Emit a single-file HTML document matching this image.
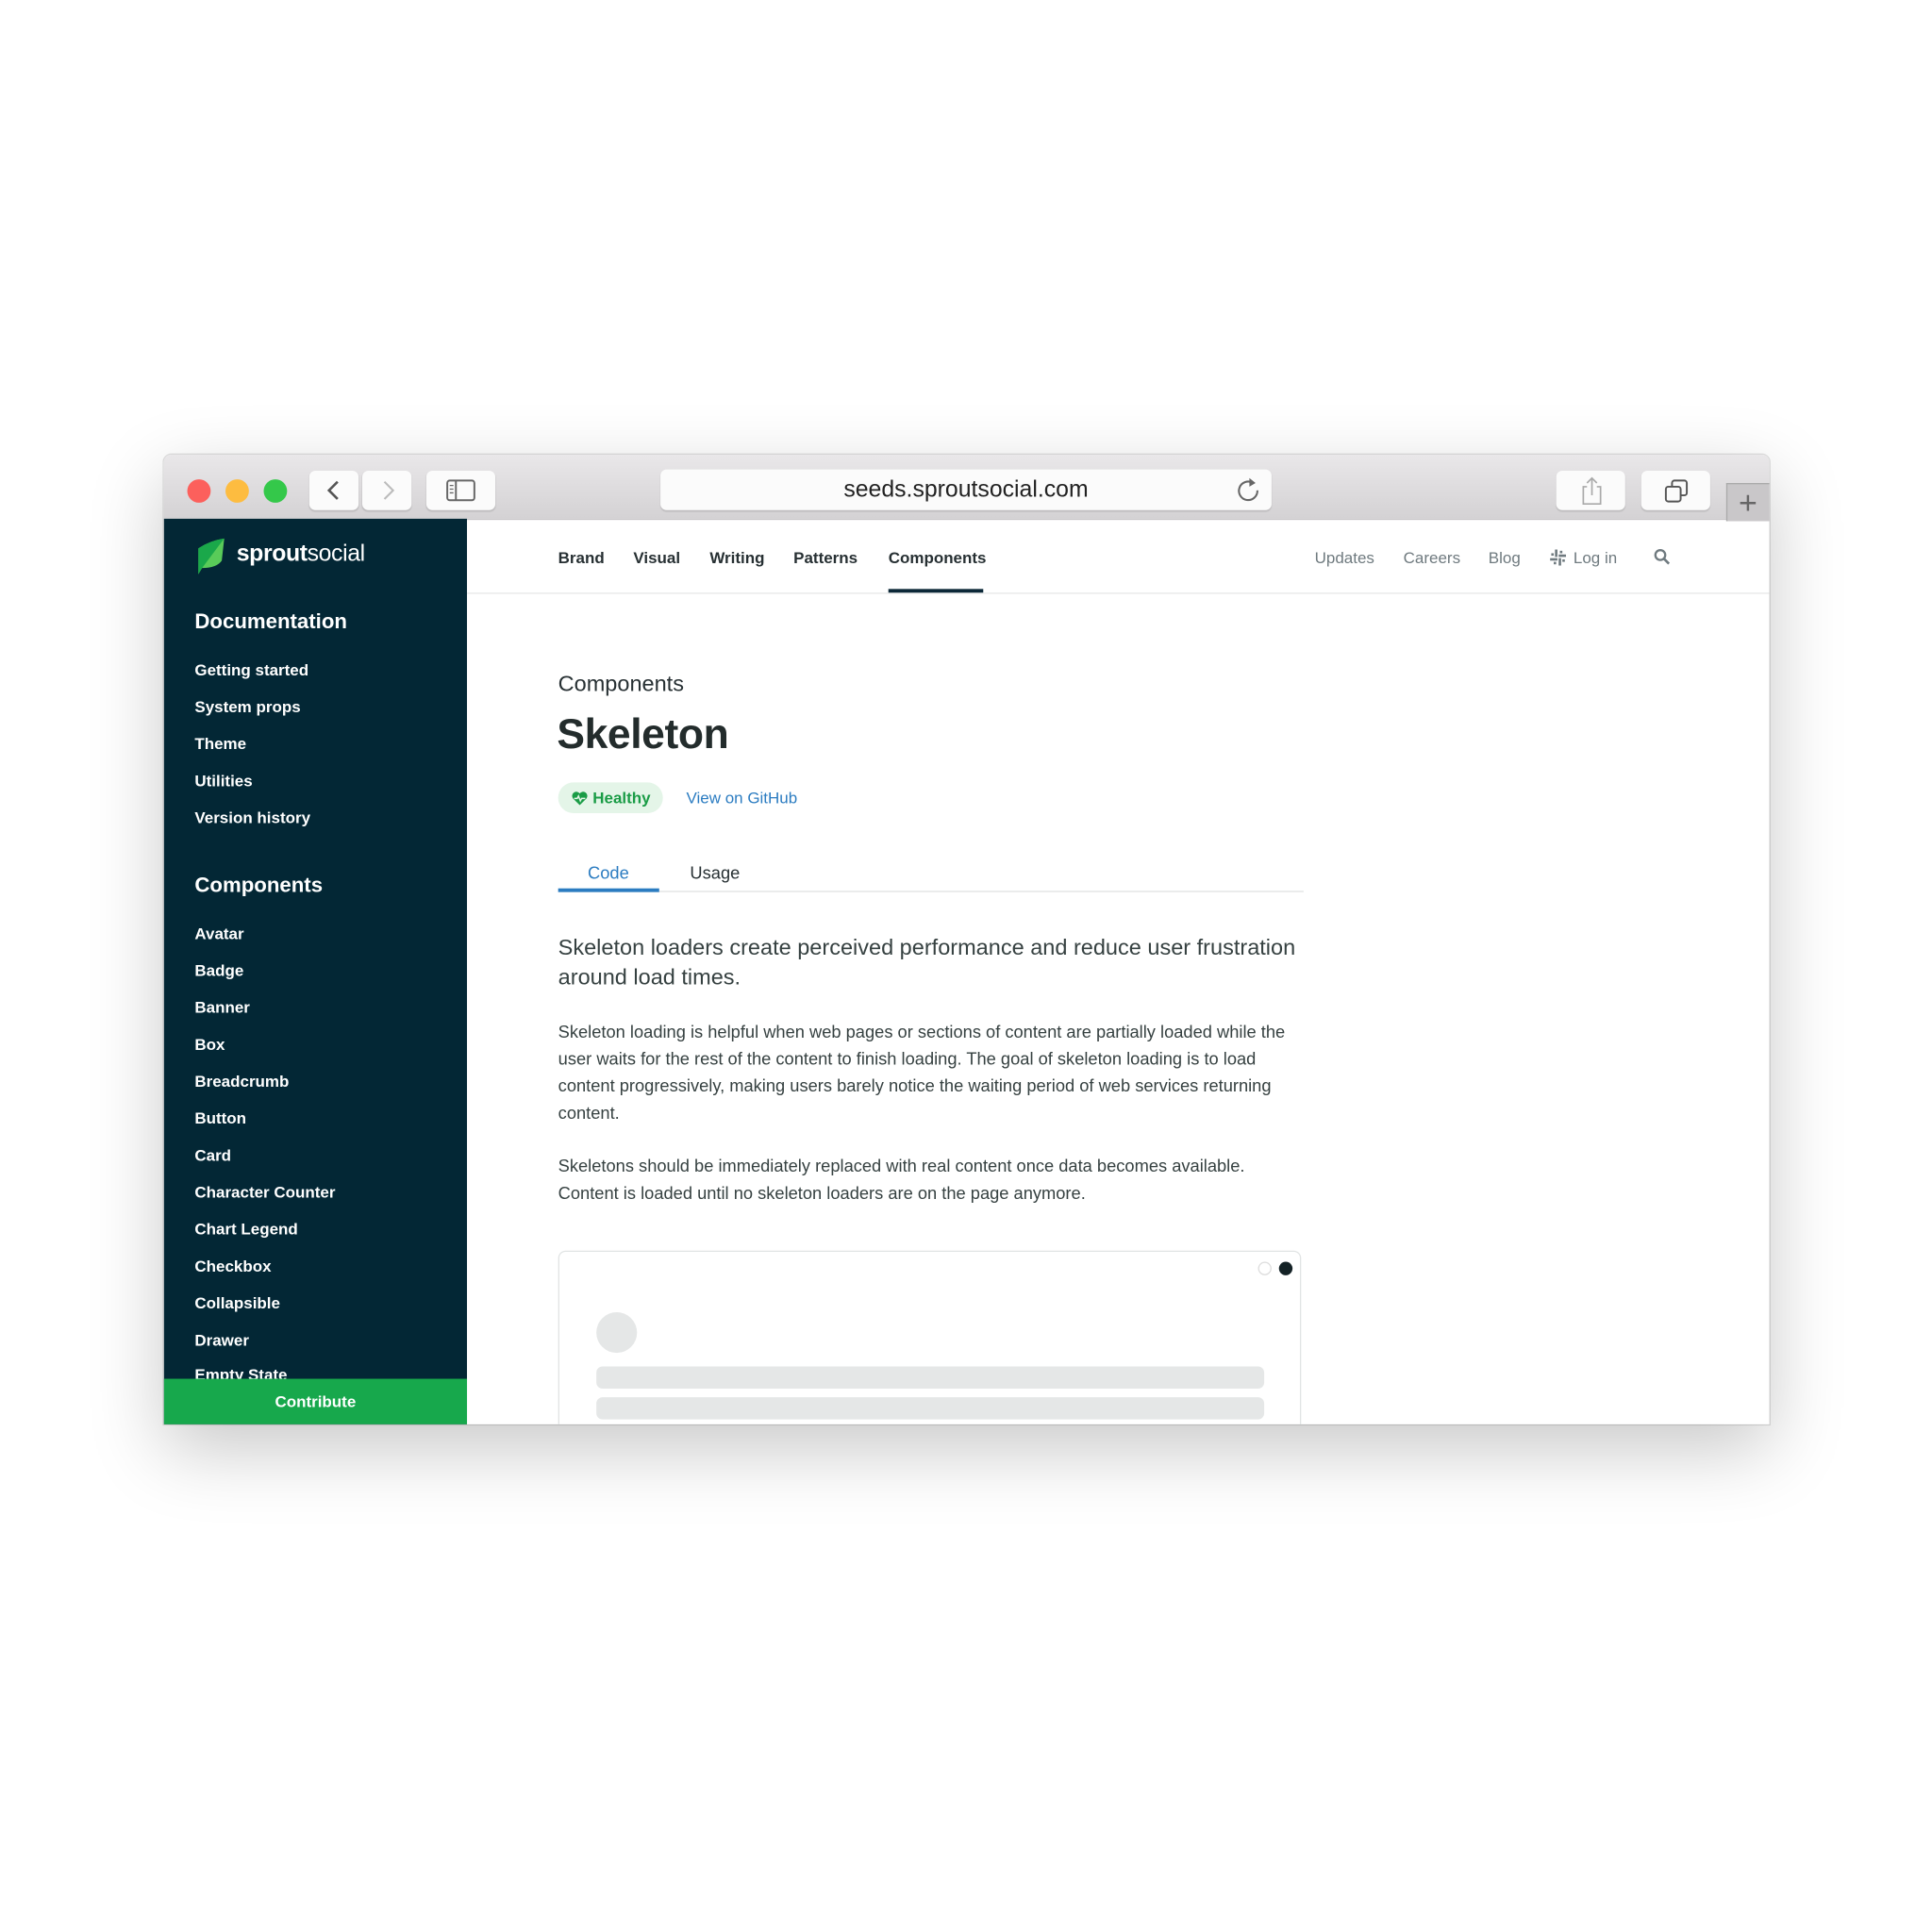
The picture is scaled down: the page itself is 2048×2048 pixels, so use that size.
<!DOCTYPE html>
<html><head><meta charset="utf-8"><style>
html,body{margin:0;padding:0;background:#fff;width:2048px;height:2048px;overflow:hidden}
#s{position:absolute;left:0;top:0;width:1568px;height:1568px;transform:scale(1.306122);transform-origin:0 0;font-family:"Liberation Sans",Arial,sans-serif}
.a{position:absolute}
#win{left:133px;top:369px;width:1303px;height:787px;border-radius:6px 6px 0 0;overflow:hidden;box-shadow:0 20px 60px rgba(0,0,0,.22),0 0 0 1px rgba(0,0,0,.12);background:#fff}
#tb{left:0;top:0;width:1303px;height:52px;background:linear-gradient(#e9e7e9,#d4d2d4);border-bottom:1px solid #c8c6c8}
.dot{width:19px;height:19px;border-radius:50%;top:20px}
.btn{background:#fbfbfb;border-radius:5px;box-shadow:0 1px 1px rgba(0,0,0,.12);height:32px;top:13px}
#sb{left:0;top:52px;width:246px;height:735px;background:#032735}
.sbi{position:absolute;left:25px;color:#fff;font-weight:bold;font-size:13px}
.sbh{position:absolute;left:25px;color:#fff;font-weight:bold;font-size:17px}
.nav{position:absolute;top:76px;font-size:13px;font-weight:bold;color:#273033}
.nr{position:absolute;top:76px;font-size:13px;color:#6f7a7f}
p{margin:0}
</style></head><body><div id="s">
<div id="win" class="a">
 <div id="tb" class="a">
  <div class="a dot" style="left:19px;background:#fc605c"></div>
  <div class="a dot" style="left:50px;background:#fdbc40"></div>
  <div class="a dot" style="left:81px;background:#34c84a"></div>
  <div class="a btn" style="left:118px;width:40px"><svg class="a" style="left:12px;top:7px" width="16" height="18"><path d="M11 2 L4 9 L11 16" stroke="#555" stroke-width="2" fill="none"/></svg></div>
  <div class="a btn" style="left:161px;width:40px"><svg class="a" style="left:13px;top:7px" width="16" height="18"><path d="M5 2 L12 9 L5 16" stroke="#bbb" stroke-width="1.6" fill="none"/></svg></div>
  <div class="a btn" style="left:213px;width:56px"><svg class="a" style="left:16px;top:7px" width="24" height="18"><rect x="1" y="1" width="22" height="16" rx="2" stroke="#666" stroke-width="1.5" fill="none"/><line x1="8" y1="1" x2="8" y2="17" stroke="#666" stroke-width="1.5"/><path d="M3 5h3M3 8h3M3 11h3" stroke="#666"/></svg></div>
  <div class="a btn" style="left:403px;width:496px;top:12px;height:33px"><div class="a" style="left:0;width:496px;top:6px;text-align:center;font-size:19px;color:#222">seeds.sproutsocial.com</div>
   <svg class="a" style="left:466px;top:6px" width="22" height="22"><path d="M15 5 A7.5 7.5 0 1 0 18.5 11" stroke="#666" stroke-width="1.6" fill="none"/><path d="M12 1 L17 5 L12 8z" fill="#666"/></svg></div>
  <div class="a btn" style="left:1130px;width:56px"><svg class="a" style="left:19px;top:4px" width="20" height="25"><path d="M6 9H3v14h14V9h-3M10 16V2M6 6l4-4 4 4" stroke="#aaa" stroke-width="1.3" fill="none"/></svg></div>
  <div class="a btn" style="left:1199px;width:56px"><svg class="a" style="left:18px;top:6px" width="22" height="22"><rect x="2" y="7" width="12" height="12" rx="2" stroke="#555" stroke-width="1.5" fill="none"/><path d="M7 7V4a2 2 0 0 1 2-2h8a2 2 0 0 1 2 2v8a2 2 0 0 1-2 2h-3" stroke="#555" stroke-width="1.5" fill="none"/></svg></div>
  <div class="a" style="left:1268px;top:23px;width:35px;height:30px;background:#c9c7c9;border-left:1px solid #aaa;border-top:1px solid #aaa"><div class="a" style="left:9px;top:0;font-size:26px;color:#666;font-weight:300">+</div></div>
 </div>
 <div id="sb" class="a">
  <svg class="a" style="left:25px;top:16px" width="26" height="30"><path d="M3 8 Q12 2 24 0 L22 18 Q18 24 6 24 L3 29z" fill="#59cb59"/><path d="M3 8 Q12 2 24 0 L6 24 L3 29z" fill="#1aa84a"/></svg>
  <div class="a" style="left:59px;top:18px;color:#fff;font-size:19px;letter-spacing:-.3px"><b>sprout</b>social</div>
  <div class="sbh" style="top:74px">Documentation</div>
  <div class="sbi" style="top:115px">Getting started</div>
  <div class="sbi" style="top:145px">System props</div>
  <div class="sbi" style="top:175px">Theme</div>
  <div class="sbi" style="top:205px">Utilities</div>
  <div class="sbi" style="top:235px">Version history</div>
  <div class="sbh" style="top:288px">Components</div>
  <div class="sbi" style="top:329px">Avatar</div>
  <div class="sbi" style="top:359px">Badge</div>
  <div class="sbi" style="top:389px">Banner</div>
  <div class="sbi" style="top:419px">Box</div>
  <div class="sbi" style="top:449px">Breadcrumb</div>
  <div class="sbi" style="top:479px">Button</div>
  <div class="sbi" style="top:509px">Card</div>
  <div class="sbi" style="top:539px">Character Counter</div>
  <div class="sbi" style="top:569px">Chart Legend</div>
  <div class="sbi" style="top:599px">Checkbox</div>
  <div class="sbi" style="top:629px">Collapsible</div>
  <div class="sbi" style="top:659px">Drawer</div>
  <div class="sbi" style="top:687px">Empty State</div>
  <div class="a" style="left:0;top:698px;width:246px;height:37px;background:#17a84c;color:#fff;font-weight:bold;font-size:13px;text-align:center;line-height:37px">Contribute</div>
 </div>
 <div class="a" style="left:246px;top:112px;width:1057px;height:1px;background:#e6e8e8"></div>
 <div class="nav" style="left:320px">Brand</div>
 <div class="nav" style="left:381px">Visual</div>
 <div class="nav" style="left:443px">Writing</div>
 <div class="nav" style="left:511px">Patterns</div>
 <div class="nav" style="left:588px">Components</div>
 <div class="a" style="left:588px;top:109px;width:77px;height:3px;background:#0c2838"></div>
 <div class="nr" style="left:934px">Updates</div>
 <div class="nr" style="left:1006px">Careers</div>
 <div class="nr" style="left:1075px">Blog</div>
 <svg class="a" style="left:1125px;top:77px" width="13" height="13"><g fill="#6f7a7f"><rect x="4" y="0" width="2" height="6"/><rect x="7" y="7" width="2" height="6"/><rect x="0" y="7" width="6" height="2"/><rect x="7" y="4" width="6" height="2"/><rect x="1" y="3" width="2" height="2"/><rect x="10" y="8" width="2" height="2"/><rect x="8" y="1" width="2" height="2"/><rect x="3" y="10" width="2" height="2"/></g></svg>
 <div class="nr" style="left:1144px">Log in</div>
 <svg class="a" style="left:1209px;top:76px" width="14" height="14"><circle cx="5.5" cy="5.5" r="4" stroke="#6f7a7f" stroke-width="1.8" fill="none"/><path d="M8.5 8.5L12.5 12.5" stroke="#6f7a7f" stroke-width="2"/></svg>
 <div class="a" style="left:320px;top:176px;font-size:18px;color:#273033">Components</div>
 <div class="a" style="left:319px;top:208px;font-size:34px;font-weight:bold;color:#232c2c;letter-spacing:-.3px">Skeleton</div>
 <div class="a" style="left:320px;top:266px;width:85px;height:25px;border-radius:13px;background:#e4f5e8"><svg class="a" style="left:11px;top:7px" width="13" height="12"><path d="M6.5 11.5 L1 6 A3 3 0 0 1 6.5 2 A3 3 0 0 1 12 6z" fill="#1a9c46"/><path d="M2 6h2.5l1-2 1.5 4 1-2h3" stroke="#e4f5e8" stroke-width="1.1" fill="none"/></svg><div class="a" style="left:28px;top:5px;font-size:13px;font-weight:bold;color:#1a9c46">Healthy</div></div>
 <div class="a" style="left:424px;top:271px;font-size:13px;color:#2b7cc1">View on GitHub</div>
 <div class="a" style="left:320px;top:354px;width:605px;height:1px;background:#dfe2e2"></div>
 <div class="a" style="left:320px;top:352px;width:82px;height:3px;background:#2b7cc1"></div>
 <div class="a" style="left:344px;top:331px;font-size:14px;color:#2b7cc1">Code</div>
 <div class="a" style="left:427px;top:331px;font-size:14px;color:#273033">Usage</div>
 <div class="a" style="left:320px;top:388px;width:610px;font-size:18px;line-height:24px;color:#364141">Skeleton loaders create perceived performance and reduce user frustration around load times.</div>
 <div class="a" style="left:320px;top:457px;width:610px;font-size:14px;line-height:22px;color:#364141"><p>Skeleton loading is helpful when web pages or sections of content are partially loaded while the user waits for the rest of the content to finish loading. The goal of skeleton loading is to load content progressively, making users barely notice the waiting period of web services returning content.</p><p style="margin-top:21px">Skeletons should be immediately replaced with real content once data becomes available. Content is loaded until no skeleton loaders are on the page anymore.</p></div>
 <div class="a" style="left:320px;top:646px;width:601px;height:160px;border:1px solid #e1e4e4;border-radius:6px"></div>
 <div class="a" style="left:888px;top:655px;width:9px;height:9px;border-radius:50%;border:1px solid #ddd;background:#fff"></div>
 <div class="a" style="left:905px;top:655px;width:11px;height:11px;border-radius:50%;background:#142226"></div>
 <div class="a" style="left:351px;top:696px;width:33px;height:33px;border-radius:50%;background:#e5e7e7"></div>
 <div class="a" style="left:351px;top:740px;width:542px;height:18px;border-radius:5px;background:#e5e7e7"></div>
 <div class="a" style="left:351px;top:765px;width:542px;height:18px;border-radius:5px;background:#e5e7e7"></div>
</div>
</div></body></html>
